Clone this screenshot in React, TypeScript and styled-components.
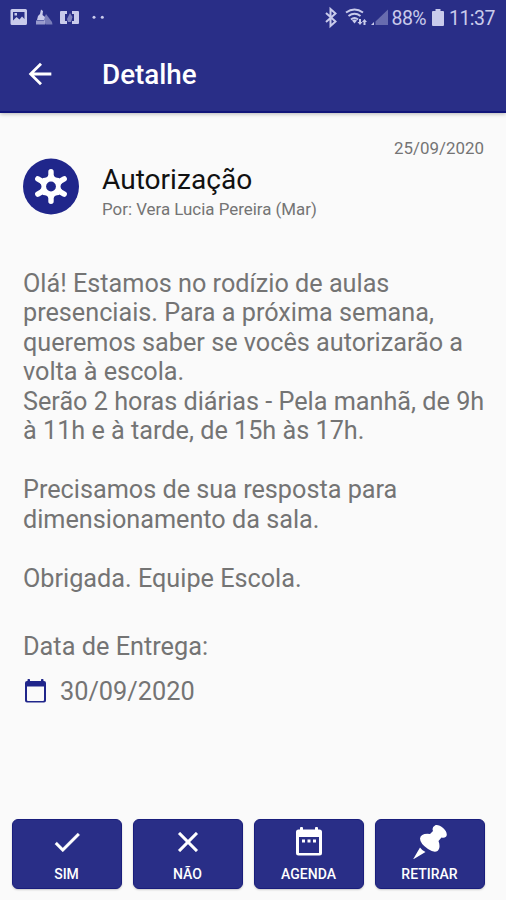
import React from 'react';
import styled, { createGlobalStyle } from 'styled-components';

const navy = '#292e87';

const GlobalStyle = createGlobalStyle`
  * { box-sizing: border-box; }
  html, body, #root { margin: 0; height: 100%; }
  body { background: #fafafa; overflow: hidden; font-family: Roboto, sans-serif; }
  svg { display: block; flex: none; }
`;

const Screen = styled.main`
  display: flex;
  flex-direction: column;
  width: 506px;
  height: 900px;
  background: #fafafa;
  color: #747474;
`;

const Header = styled.header`
  flex: none;
  height: 113px;
  background: ${navy};
  border-bottom: 2px solid #11157a;
  box-shadow: 0 1px 4px rgba(0, 0, 0, 0.28);
`;

const StatusBar = styled.div`
  display: flex;
  justify-content: space-between;
  height: 35px;
  padding: 0 11px 0 10px;
  color: #c9cbeb;
`;

const StatusText = styled.span<{ $spacing: number }>`
  font-size: 19.5px;
  line-height: 37px;
  letter-spacing: ${(p) => p.$spacing}px;
  white-space: nowrap;
`;

const StatusGroup = styled.div`
  display: flex;
`;

const AppBar = styled.div`
  display: flex;
  align-items: center;
  height: 78px;
  padding-left: 23px;
`;

const BackButton = styled.button`
  padding: 0;
  border: 0;
  background: none;
  color: #fff;
  margin: 0 45px 0 0;
`;

const PageTitle = styled.h1`
  margin: 2px 0 0;
  font-size: 27.8px;
  font-weight: 500;
  line-height: 34px;
  color: #fff;
`;

const Content = styled.section`
  flex: 1;
  padding: 24px 22px 0 23px;
`;

const PostDate = styled.time`
  display: block;
  height: 21px;
  font-size: 16.9px;
  line-height: 22px;
  text-align: right;
`;

const Summary = styled.div`
  display: flex;
  gap: 23px;
  height: 59px;
`;

const SummaryText = styled.div`
  padding-top: 5px;
`;

const Subject = styled.h2`
  margin: 0;
  font-size: 28.1px;
  font-weight: 400;
  line-height: 34px;
  color: #111;
`;

const Author = styled.div`
  font-size: 16.9px;
  line-height: 25px;
`;

const Message = styled.div`
  margin-top: 51.6px;
  font-size: 25.23px;
  line-height: 29.55px;
  white-space: pre;
`;

const DueLabel = styled.div`
  margin-top: 38.4px;
  font-size: 25.3px;
  line-height: 30px;
`;

const DueDate = styled.div`
  display: flex;
  align-items: center;
  gap: 12px;
  margin-top: 15px;
  font-size: 25.3px;
  line-height: 30px;
`;

const Actions = styled.nav`
  display: grid;
  grid-template-columns: repeat(4, 110px);
  gap: 11px;
  padding: 0 0 11px 11.5px;
`;

const ActionButton = styled.button`
  display: flex;
  flex-direction: column;
  align-items: center;
  height: 70px;
  padding: 5px 0 0;
  border: 1px solid #191d7c;
  border-radius: 6px;
  background: ${navy};
  color: #fff;
  font: 500 14px/20px Roboto, sans-serif;
  box-shadow: 0 1px 2px rgba(0, 0, 0, 0.2);
`;

const ActionLabel = styled.span`
  margin-top: 5px;
`;

const NotificationIcons = () => (
  <svg width="100" height="35" viewBox="10 0 100 35" fill="currentColor">
    <path fillRule="evenodd" d="M12 9h13.500q1.500 0 1.500 1.500v13q0 1.500-1.500 1.500h-13.500q-1.500 0-1.500-1.500v-13q0-1.500 1.500-1.500zM13 12v8.500l3.500-3.500 3 2.500 2.500-3 2.500 2.500v-7z" />
    <rect x="14.500" y="13" width="2.500" height="2.500" />
    <path d="M41 9.500l2 1.500-.5 4 2.500 2-1 3h-7l1-4 2-2z" />
    <path d="M36 20.500h9v4h-9z" opacity=".7" />
    <path d="M46 14l6 8 .5 2.500h-7l-2-5z" opacity=".5" />
    <path d="M61 11h6v3h-2v7h2v3h-6q-1 0-1-1v-11q0-1 1-1zM72 11h6q1 0 1 1v11q0 1-1 1h-6v-3h2v-7h-2z" />
    <path d="M70 13l2.500 4-1.500 5h-3l-1-3z" opacity=".55" />
    <circle cx="94" cy="17.300" r="1.500" /><circle cx="102.300" cy="17.300" r="1.500" />
  </svg>
);

const RadioIcons = () => (
  <svg width="69" height="35" viewBox="322 0 69 35" fill="none" stroke="currentColor">
    <path d="M325 13l9.500 8.500-5 4.500v-17l5 4.500-9.500 8.500" strokeWidth="2" />
    <g strokeWidth="2">
      <path d="M345 12.500q8.500-6 17 0M347.500 16q6-4.500 12 0M350 19.500q3.500-3 7 0" />
    </g>
    <path d="M351 20.500q2.500-2 5 0l-2.500 3zM358 19h2v3h1.500l-2.500 3-2.500-3h1.500zM362.500 25h2v-3h1.500l-2.500-3-2.500 3h1.500z" fill="currentColor" stroke="none" />
    <path d="M387 9.500v15.500h-12.500v-3.500z" fill="currentColor" stroke="none" opacity=".4" />
    <path d="M370 25h3v-3z" fill="currentColor" stroke="none" />
  </svg>
);

const BatteryIcon = () => (
  <svg width="23" height="35" viewBox="427 0 23 35" fill="currentColor">
    <path d="M436.500 9h5v2h2.500q1 0 1 1v13q0 1-1 1h-10q-1 0-1-1v-13q0-1 1-1h2.500z" />
  </svg>
);

const BackIcon = () => (
  <svg width="34" height="34" viewBox="0 0 24 24" fill="currentColor">
    <path d="M20 11H7.830l5.590-5.590L12 4l-8 8 8 8 1.410-1.410L7.830 13H20z" />
  </svg>
);

const HubIcon = () => (
  <svg width="56" height="57" viewBox="-28 -28.500 56 57">
    <circle r="28" fill="#20268b" />
    <g stroke="#fff" strokeWidth="5.400" strokeLinecap="round">
      <path d="M0-14.800V14.800M-13.200-7.600L13.200 7.600M-13.200 7.600L13.200-7.600" />
    </g>
    <path d="M-2.500-11.500Q-3.500-8.500-8-8.500L-11-3.500Q-8 0-11 3.500L-8 8.500Q-3.500 8.500-2.500 11.500H2.500Q3.500 8.500 8 8.500L11 3.500Q8 0 11-3.500L8-8.500Q3.500-8.500 2.500-11.500z" fill="#fff" />
    <circle r="4.900" fill="#20268b" />
  </svg>
);

const CalendarIcon = () => (
  <svg width="25" height="26" viewBox="0 0.500 25 26" fill="#20268b">
    <path fillRule="evenodd" d="M4.500 2.500V1.300q0-.8.800-.8h.9q.8 0 .8.800V2.500h11V1.300q0-.8.800-.8h.9q.8 0 .8.800V2.500h.5q2 0 2 2v17.500q0 2-2 2H4q-2 0-2-2V4.500q0-2 2-2zM4 8v13.500q0 1 1 1h15q1 0 1-1V8z" />
  </svg>
);

const CheckIcon = () => (
  <svg width="34" height="34" viewBox="0 0 24 24" fill="currentColor" stroke="currentColor" strokeWidth=".2">
    <path d="M9 16.170 4.830 12l-1.420 1.410L9 19 21 7l-1.410-1.410z" />
  </svg>
);

const CloseIcon = () => (
  <svg width="34" height="34" viewBox="0 0 24 24" fill="currentColor" stroke="currentColor" strokeWidth=".2">
    <path d="M19 6.410 17.590 5 12 10.590 6.410 5 5 6.410 10.590 12 5 17.590 6.410 19 12 13.410 17.590 19 19 17.590 13.410 12z" />
  </svg>
);

const AgendaIcon = () => (
  <svg width="34" height="34" viewBox="0 0 34 34" fill="currentColor">
    <path fillRule="evenodd" d="M8 4.500V3q0-1 1-1h1q1 0 1 1v1.500h12V3q0-1 1-1h1q1 0 1 1v1.500h1.500q2.500 0 2.500 2.500v21q0 2.500-2.500 2.500H6.500Q4 30.500 4 28V7q0-2.500 2.500-2.500zM7 12v16h20V12z" />
    <path d="M10 14.500h3v3h-3zM15.500 14.500h3v3h-3zM21 14.500h3v3h-3z" />
  </svg>
);

const PinIcon = () => (
  <svg width="36" height="34" viewBox="0 0 36 34" fill="currentColor">
    <path d="M23 .5C26-1.500 35 4 34.800 10Q34 13.500 29.500 12.500L26.500 16C28 20 28 24 25.500 26Q22 28 16 24Q8 18.500 8 13.500Q9 8 18 9L21 6Q19.500 2.500 23 .5z" />
    <path d="M8 22.500Q10 25.500 13.500 27L1 34.500z" />
  </svg>
);

const actions = [
  { label: 'SIM', Icon: CheckIcon },
  { label: 'NÃO', Icon: CloseIcon },
  { label: 'AGENDA', Icon: AgendaIcon },
  { label: 'RETIRAR', Icon: PinIcon },
];

const message = `Olá! Estamos no rodízio de aulas
presenciais. Para a próxima semana,
queremos saber se vocês autorizarão a
volta à escola.
Serão 2 horas diárias - Pela manhã, de 9h
à 11h e à tarde, de 15h às 17h.

Precisamos de sua resposta para
dimensionamento da sala.

Obrigada. Equipe Escola.`;

export default function App() {
  return (
    <>
      <GlobalStyle />
      <Screen>
        <Header>
          <StatusBar>
            <NotificationIcons />
            <StatusGroup>
              <RadioIcons />
              <StatusText $spacing={-0.6}>88%</StatusText>
              <BatteryIcon />
              <StatusText $spacing={-0.5}>11:37</StatusText>
            </StatusGroup>
          </StatusBar>
          <AppBar>
            <BackButton aria-label="Voltar"><BackIcon /></BackButton>
            <PageTitle>Detalhe</PageTitle>
          </AppBar>
        </Header>
        <Content>
          <PostDate>25/09/2020</PostDate>
          <Summary>
            <HubIcon />
            <SummaryText>
              <Subject>Autorização</Subject>
              <Author>Por: Vera Lucia Pereira (Mar)</Author>
            </SummaryText>
          </Summary>
          <Message>{message}</Message>
          <DueLabel>Data de Entrega:</DueLabel>
          <DueDate><CalendarIcon />30/09/2020</DueDate>
        </Content>
        <Actions>
          {actions.map(({ label, Icon }) => (
            <ActionButton key={label}>
              <Icon />
              <ActionLabel>{label}</ActionLabel>
            </ActionButton>
          ))}
        </Actions>
      </Screen>
    </>
  );
}
